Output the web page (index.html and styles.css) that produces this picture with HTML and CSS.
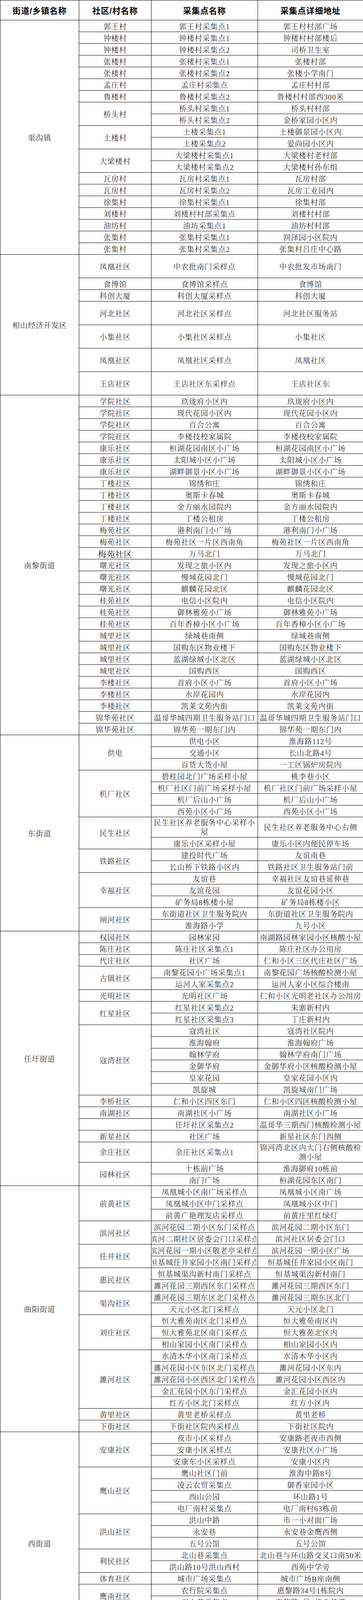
FILE: index.html
```html
<!DOCTYPE html>
<html lang="zh-CN">
<head>
<meta charset="utf-8">
<title>核酸采集点</title>
<link rel="stylesheet" href="styles.css">
</head>
<body>
<table class="sheet">
<colgroup><col class="c1"><col class="c2"><col class="c3"><col class="c4"></colgroup>
<thead>
<tr class="h"><th>街道/乡镇名称</th><th>社区/村名称</th><th>采集点名称</th><th>采集点详细地址</th></tr>
</thead>
<tbody>
<tr><td rowspan="20">渠沟镇</td><td>郭王村</td><td>郭王村采集点1</td><td>郭王村村部广场</td></tr>
<tr><td>钟楼村</td><td>钟楼村采集点1</td><td>钟楼村村部楼后</td></tr>
<tr><td>钟楼村</td><td>钟楼村采集点2</td><td>司桥卫生室</td></tr>
<tr><td>张楼村</td><td>张楼村采集点1</td><td>张楼村部</td></tr>
<tr><td>张楼村</td><td>张楼村采集点2</td><td>张楼小学南门</td></tr>
<tr><td>孟庄村</td><td>孟庄村采集点</td><td>孟庄村村部</td></tr>
<tr><td>鲁楼村</td><td>鲁楼村采集点2</td><td>鲁楼村村部西300米</td></tr>
<tr><td rowspan="2">桥头村</td><td>桥头村采集点1</td><td>桥头村村部</td></tr>
<tr><td>桥头村采集点2</td><td>金桥家园小区内</td></tr>
<tr><td rowspan="2">土楼村</td><td>土楼采集点1</td><td>土楼御景园小区内</td></tr>
<tr><td>土楼采集点2</td><td>爱尚园小区内</td></tr>
<tr><td rowspan="2">大梁楼村</td><td>大梁楼村采集点1</td><td>大梁楼村老村部</td></tr>
<tr><td>大梁楼村采集点2</td><td>大梁楼村孙东组</td></tr>
<tr><td>瓦房村</td><td>瓦房村采集点1</td><td>瓦房村部</td></tr>
<tr><td>瓦房村</td><td>瓦房村采集点2</td><td>瓦房工业园内</td></tr>
<tr><td>徐集村</td><td>徐集村采集点1</td><td>徐集村部</td></tr>
<tr><td>刘楼村</td><td>刘楼村村部采集点</td><td>刘楼村村部</td></tr>
<tr><td>油坊村</td><td>油坊采集点1</td><td>油坊村村部</td></tr>
<tr><td>张集村</td><td>张集村采集点1</td><td>润泽园小区院内</td></tr>
<tr><td>张集村</td><td>张集村采集点2</td><td>张集村吕庄中心路</td></tr>

<tr class="d"><td rowspan="7">相山经济开发区</td><td>凤凰社区</td><td>中农批南门采样点</td><td>中农批发市场南门</td></tr>
<tr><td>食博馆</td><td>食博馆采样点</td><td>食博馆</td></tr>
<tr><td>科创大厦</td><td>科创大厦采样点</td><td>科创大厦</td></tr>
<tr class="d"><td>河北社区</td><td>河北社区采样点</td><td>河北社区服务站</td></tr>
<tr class="d"><td>小集社区</td><td>小集社区采样点</td><td>小集社区</td></tr>
<tr class="d"><td>凤凰社区</td><td>凤凰社区采样点</td><td>凤凰社区</td></tr>
<tr class="d"><td>王店社区</td><td>王店社区东采样点</td><td>王店社区东</td></tr>

<tr><td rowspan="29">南黎街道</td><td>学院社区</td><td>玖珑府小区内</td><td>玖珑府小区内</td></tr>
<tr><td>学院社区</td><td>现代花园小区内</td><td>现代花园小区内</td></tr>
<tr><td>学院社区</td><td>百合公寓</td><td>百合公寓</td></tr>
<tr><td>学院社区</td><td>李楼技校家属院</td><td>李楼技校家属院</td></tr>
<tr><td>康乐社区</td><td>桓湖花园南区小广场</td><td>桓湖花园南区小广场</td></tr>
<tr><td>康乐社区</td><td>太阳城小区小广场</td><td>太阳城小区小广场</td></tr>
<tr><td>康乐社区</td><td>湖畔御景小区小广场</td><td>湖畔御景小区小广场</td></tr>
<tr><td>丁楼社区</td><td>锦绣和庄</td><td>锦绣和庄</td></tr>
<tr><td>丁楼社区</td><td>奥斯卡春城</td><td>奥斯卡春城</td></tr>
<tr><td>丁楼社区</td><td>金方丽水园院内</td><td>金方丽水园院内</td></tr>
<tr><td>丁楼社区</td><td>丁楼公租房</td><td>丁楼公租房</td></tr>
<tr><td>梅苑社区</td><td>港利南门小广场</td><td>港利南门小广场</td></tr>
<tr><td>梅苑社区</td><td>梅苑社区一片区西南角</td><td>梅苑社区一片区西南角</td></tr>
<tr><td class="big">梅苑社区</td><td>万马北门</td><td>万马北门</td></tr>
<tr><td>曙光社区</td><td>发现之旅小区内</td><td>发现之旅小区内</td></tr>
<tr><td>曙光社区</td><td>慢城花园北门</td><td>慢城花园北门</td></tr>
<tr><td>曙光社区</td><td>麒麟花园北区</td><td>麒麟花园北区</td></tr>
<tr><td>桂苑社区</td><td>电信小区院内</td><td>电信小区院内</td></tr>
<tr><td>桂苑社区</td><td>御林雅苑小广场</td><td>御林雅苑小广场</td></tr>
<tr><td>桂苑社区</td><td>百年香樟小区小广场</td><td>百年香樟小区小广场</td></tr>
<tr><td>城里社区</td><td>绿城巷南侧</td><td>绿城巷南侧</td></tr>
<tr><td>城里社区</td><td>国购东区物业楼下</td><td>国购东区物业楼下</td></tr>
<tr><td>城里社区</td><td>蓝湖绿城小区北区</td><td>蓝湖绿城小区北区</td></tr>
<tr><td>城里社区</td><td>国购西区</td><td>国购西区</td></tr>
<tr><td>李楼社区</td><td>首府小区小广场</td><td>首府小区小广场</td></tr>
<tr><td>李楼社区</td><td>水岸花园内</td><td>水岸花园内</td></tr>
<tr><td>李楼社区</td><td>凯莱文苑内街</td><td>凯莱文苑内街</td></tr>
<tr><td>锦华苑社区</td><td>温哥华城四期卫生服务站门口</td><td>温哥华城四期卫生服务站门口</td></tr>
<tr><td>锦华苑社区</td><td>锦华苑一期东门内</td><td>锦华苑一期东门内</td></tr>

<tr><td rowspan="16">东街道</td><td rowspan="3">供电</td><td>供电小区</td><td>淮海路112号</td></tr>
<tr><td>交通小区</td><td>长山北路4号</td></tr>
<tr><td>百货大货小屋</td><td>一工区锅炉房院内</td></tr>
<tr><td rowspan="4">机厂社区</td><td>碧桂园北门广场采样小屋</td><td>桃李巷小区</td></tr>
<tr><td>机厂社区门前广场采样小屋</td><td>机厂社区门前广场采样小屋</td></tr>
<tr><td>机厂后山小广场</td><td>机厂后山小广场</td></tr>
<tr><td>西苑小区小广场</td><td>西苑小区小广场</td></tr>
<tr class="t"><td rowspan="2">民生社区</td><td>民生社区养老服务中心采样小屋</td><td>民生社区养老服务中心右侧</td></tr>
<tr><td>康乐小区采样小屋</td><td>康乐小区内便民停车场</td></tr>
<tr><td rowspan="2">铁路社区</td><td>建投时代广场</td><td>友谊南巷</td></tr>
<tr><td>长山桥下铁路小区内</td><td>铁路社区卫生服务站门前</td></tr>
<tr><td rowspan="3">幸福社区</td><td>友谊巷</td><td>幸福社区友谊巷延伸巷</td></tr>
<tr><td>友谊花园</td><td>友谊花园小区</td></tr>
<tr><td>矿务局8栋楼小屋</td><td>矿务局8栋楼小区</td></tr>
<tr><td rowspan="2">闸河社区</td><td>东街道社区卫生服务院内</td><td>东街道社区卫生服务院内</td></tr>
<tr><td>淮海路小学</td><td>九号小区</td></tr>

<tr><td rowspan="21">任圩街道</td><td>权园社区</td><td>园林家园</td><td>南湖路园林家园小区核酸小屋</td></tr>
<tr><td>陈庄社区</td><td>陈庄社区采集点1</td><td>陈庄社区办公用房</td></tr>
<tr><td>代庄社区</td><td>社区广场</td><td>仁和小区三区代庄社区广场</td></tr>
<tr><td rowspan="2">古镇社区</td><td>南黎花园小广场采集点1</td><td>南黎花园广场核酸检测小屋</td></tr>
<tr><td>运河人家采集点2</td><td>运河人家小区综合楼南</td></tr>
<tr><td>光明社区</td><td>光明社区广场</td><td>仁和小区光明老社区办公用房</td></tr>
<tr><td rowspan="2">红星社区</td><td>红星社区采集点2</td><td>朱寨新村内</td></tr>
<tr><td>红星社区采集点3</td><td>丁庄新村内</td></tr>
<tr><td rowspan="6">寇湾社区</td><td>寇湾社区</td><td>寇湾社区院内</td></tr>
<tr><td>淮海翰府</td><td>淮海翰府广场</td></tr>
<tr><td>翰林学府</td><td>翰林学府南门广场</td></tr>
<tr><td>金御华府</td><td>金御华府小区核酸检测小屋</td></tr>
<tr><td>皇家花园</td><td>皇家花园小区内</td></tr>
<tr><td>凯旋城</td><td>凯旋城南门广场</td></tr>
<tr><td>李桥社区</td><td>仁和小区四区东门</td><td>仁和小区四区核酸检测小屋</td></tr>
<tr><td>南湖社区</td><td>南湖社区小广场</td><td>南湖社区小广场</td></tr>
<tr><td></td><td>任圩社区采集点2</td><td>温哥华三期西门核酸检测小屋</td></tr>
<tr><td>新星社区</td><td>社区广场</td><td>新星社区东门西侧</td></tr>
<tr class="t"><td>余庄社区</td><td>余庄社区采集点1</td><td>锦河湾北区内大门右侧核酸检测小屋</td></tr>
<tr><td rowspan="2">园林社区</td><td>十栋前广场</td><td>淮海御府10栋前</td></tr>
<tr><td>南门广场</td><td>桓湖花园东区南门</td></tr>

<tr><td rowspan="21">曲阳街道</td><td rowspan="3">前黄社区</td><td>凤凰城小区南广场采样点</td><td>凤凰城小区南广场</td></tr>
<tr><td>凤凰城小区中门采样点</td><td>凤凰城小区中门</td></tr>
<tr><td>前黄广艳理发店采样点</td><td>前黄庄里红绿灯</td></tr>
<tr><td rowspan="2">滨河社区</td><td>滨河花园二期小区东门采样点</td><td>滨河花园二期小区东门</td></tr>
<tr><td class="nw"><div>滨河二期社区居委会门口采样点</div></td><td>滨河社区居委会门口</td></tr>
<tr><td rowspan="2">任井社区</td><td class="nw"><div>滨河花园一期小区敬老亭采样点</div></td><td>滨河花园一期小区广场</td></tr>
<tr><td class="nw"><div>恒基城任井家园小区南门采样点</div></td><td>恒基城任井家园小区南门</td></tr>
<tr><td rowspan="2">惠民社区</td><td>恒基城渠沟新村南门采样点</td><td>恒基城渠沟新村南门</td></tr>
<tr><td>濉河花园三期西区东门采样点</td><td>濉河花园三期西区东门</td></tr>
<tr><td rowspan="2">渠沟社区</td><td>濉河花园三期东区北门采样点</td><td>濉河花园三期东区北门</td></tr>
<tr><td>天元小区北门采样点</td><td>天元小区北门</td></tr>
<tr><td rowspan="3">刘庄社区</td><td>恒大雅苑南区北门采样点</td><td>恒大雅苑南区内</td></tr>
<tr><td>恒大雅苑北区南门采样点</td><td>恒大雅苑北区内</td></tr>
<tr><td>相山家园小区南门采样点</td><td>相山家园小区内</td></tr>
<tr><td rowspan="5">濉河社区</td><td>水清木华小区南门采样点</td><td>水清木华小区内</td></tr>
<tr><td>濉河花园小区东区北门采样点</td><td>濉河花园小区东内</td></tr>
<tr><td>濉河花园小区西区北门采样点</td><td>濉河花园小区西区内</td></tr>
<tr><td>金汇花园小区东门采样点</td><td>金汇花园小区内</td></tr>
<tr><td>红方小区北门采样点</td><td>红方小区内</td></tr>
<tr><td>黄里社区</td><td>黄里老桥采样点</td><td>黄里老桥</td></tr>
<tr><td>下街社区</td><td>下街社区院内采样点</td><td>下街社区院内</td></tr>

<tr><td rowspan="19">西街道</td><td rowspan="3">安康社区</td><td>夜市小区采样点</td><td>安康路老夜市西侧</td></tr>
<tr><td>安康小区采样点</td><td>安康社区小广场</td></tr>
<tr><td>安康东小区采样点</td><td>安康小区内</td></tr>
<tr><td rowspan="4">鹰山社区</td><td>鹰山社区门前</td><td>淮海中路8号</td></tr>
<tr><td>凌云农贸采集点</td><td>御香家园小区</td></tr>
<tr><td>西山公园</td><td>环山路1号</td></tr>
<tr><td>电厂南村采集点</td><td>电厂南村63栋前</td></tr>
<tr><td rowspan="3">洪山社区</td><td>洪山中路</td><td>市一小对面广场</td></tr>
<tr><td>永安巷</td><td>永安巷金鹰西侧</td></tr>
<tr><td>五号公馆</td><td>五号公馆</td></tr>
<tr><td rowspan="2">利民社区</td><td>北山巷采集点</td><td>北山巷与环山路交叉口南50米</td></tr>
<tr><td>洪山路10号洪山西村</td><td>西苑中学旁</td></tr>
<tr><td>体育社区</td><td>城市广场采集点</td><td>城市广场B座南侧</td></tr>
<tr><td rowspan="2">鹰南社区</td><td>农行院采集点</td><td>惠黎路34号1栋院内</td></tr>
<tr><td>五小巷采集点</td><td>惠黎路8号1栋北巷道</td></tr>
<tr><td rowspan="2">新华社区</td><td>华松商场南门</td><td>淮海路78号</td></tr>
<tr><td>相山路4号院</td><td>建委大院里</td></tr>
<tr><td rowspan="2">建安社区</td><td>天桥小区内</td><td>天骄小区内</td></tr>
<tr><td>307小区采集点</td><td>307小区采集点</td></tr>

<tr><td rowspan="12">东山街道</td><td rowspan="3">东山社区</td><td>特凿小区内医院门前</td><td>特凿小区内医院门前</td></tr>
<tr><td>总仓库小区</td><td>总仓库小区内</td></tr>
<tr><td>中建二局小区</td><td>中建二局小区</td></tr>
<tr><td>翰林社区</td><td>科苑小区</td><td>科苑小区门口内</td></tr>
<tr><td></td><td>翰林红色驿站</td><td>翰林红色驿站</td></tr>
<tr><td rowspan="2">建国社区</td><td>民生小区</td><td>民生小区门口内</td></tr>
<tr><td>紫藤苑小区</td><td>紫藤苑小区</td></tr>
<tr><td rowspan="2">马庄社区</td><td>马庄社区采集点1</td><td>新兴小区东门内</td></tr>
<tr><td>马庄社区采集点2</td><td>喜来登路口小区内</td></tr>
<tr><td>方顶社区</td><td>广泽家园</td><td>广泽家园B门口内</td></tr>
<tr><td>周庄社区</td><td>方安一期</td><td>方安一期门口内</td></tr>
<tr><td>祥和社区</td><td>910厂中心花园</td><td>910厂中心花园小区内</td></tr>

<tr><td rowspan="30">三堤口街道</td><td rowspan="3">三堤口社区</td><td>三堤口学校采集点</td><td>三堤口街银鑫花园门口</td></tr>
<tr class="t"><td>三堤口街口子卫生服务站采集点</td><td>口子卫生服务站</td></tr>
<tr><td>矿建基地采样点</td><td>矿建基地</td></tr>
<tr><td rowspan="4">刘桥社区</td><td>刘一小区夜市采样点</td><td>刘一小区夜市</td></tr>
<tr><td>刘桥一矿体育场东采样点</td><td>刘桥一矿体育场东</td></tr>
<tr><td>和谐小区采样点</td><td>和谐小区</td></tr>
<tr><td>刘桥一矿体育场东采样点</td><td>刘桥一矿体育场东</td></tr>
<tr><td rowspan="2">口子社区</td><td>三分厂球场采样点</td><td>三分厂球场</td></tr>
<tr><td>皖北西库采样点</td><td>皖北西库</td></tr>
<tr><td rowspan="4">庆相桥社区</td><td>五马路朱西菜市场北采样点</td><td>五马路朱西菜市场</td></tr>
<tr><td>政协广场</td><td>庆相桥社区旁的政协广场</td></tr>
<tr><td>家天下小区C区</td><td>家天下小区C区</td></tr>
<tr><td>香榭左岸售楼部采样点</td><td>香榭左岸售楼部</td></tr>
<tr><td rowspan="2">恒源社区</td><td>恒源工人村篮球场采样点</td><td>恒源工人村篮球场</td></tr>
<tr><td>振兴小区采集点采样点</td><td>振兴小区</td></tr>
<tr><td rowspan="2">朱庄社区</td><td>朱庄社区院内采样点</td><td>朱庄社区院内</td></tr>
<tr><td>热电厂小区南门采样点</td><td>热电厂小区南门</td></tr>
<tr><td rowspan="3">濉溪社区</td><td>东酒厂采样点</td><td>东酒厂</td></tr>
<tr><td>工程处单身楼小广场采样点</td><td>工程处单身楼小广场</td></tr>
<tr><td>钢丝绳厂单身楼小广场采样点</td><td>钢丝绳厂单身楼小广场</td></tr>
<tr><td rowspan="4">纺织社区</td><td>三分厂内</td><td>三分厂内</td></tr>
<tr><td>无纺厂采样点</td><td>无纺厂</td></tr>
<tr><td>溪河苑小区采样点</td><td>溪河苑小区</td></tr>
<tr><td>纺织社区居委会门口采样点</td><td>纺织社区居委会门口</td></tr>
<tr><td rowspan="2">董庄社区</td><td>金地御景小区采样点</td><td>金地御景小区</td></tr>
<tr><td>农行小区1号楼北侧</td><td>农行小区1号楼北侧</td></tr>
<tr><td rowspan="4">虎山北路社区</td><td>南苑小区门面后采样点</td><td>南苑小区</td></tr>
<tr><td>友圣家园采样点</td><td>友圣家园</td></tr>
<tr><td>弘元小区内采样点</td><td>弘元小区</td></tr>
<tr><td>纺织小区采样点</td><td>纺织小区</td></tr>

<tr><td rowspan="27">相南街道</td><td rowspan="4">中城社区</td><td>金冠紫园采集点</td><td>金冠紫园南门门岗</td></tr>
<tr><td>怡和佳园采集点</td><td>怡和佳园12栋一楼门面</td></tr>
<tr><td>华松时代北区采集点</td><td>华松时代北区南门门岗</td></tr>
<tr><td>华松时代南区采集点</td><td>华松时代南区东门门岗</td></tr>
<tr><td rowspan="3">惠苑路</td><td>惠苑路社区门口</td><td>相山北路111号统建小区院内</td></tr>
<tr><td>黎苑二期F组大门口</td><td>黎苑路70号黎苑二期F组大门</td></tr>
<tr><td>九栋楼院内</td><td>长山北路109号老九栋2栋南侧</td></tr>
<tr><td rowspan="2">春秋社区</td><td>春秋巷北头</td><td>春秋巷北头</td></tr>
<tr><td>海宫东广场</td><td class="flag">春秋巷南头</td></tr>
<tr><td rowspan="4">杏林社区</td><td>柳岸花明小区北门</td><td>惠黎路51号</td></tr>
<tr><td>国际商城东</td><td>国际商城小区内</td></tr>
<tr><td>杏林中城小区采集点</td><td>杏林社区服务站门口</td></tr>
<tr><td>美年大年健康门岗</td><td>金色阳光花园小区</td></tr>
<tr><td rowspan="4">桓谭社区</td><td>金色云天东苑南门</td><td>金色云天东苑小区南门内</td></tr>
<tr><td>火车站广场</td><td>金色云天北苑西区南门内</td></tr>
<tr class="t"><td>金色云天西苑北门</td><td>相山区金色云天西苑小区北门内</td></tr>
<tr><td>桓谭小区北门</td><td>相山区桓谭小区小区北门内</td></tr>
<tr><td rowspan="3">海宫社区</td><td>海宫南村</td><td>社区门口</td></tr>
<tr><td>凯旋百年</td><td>凯旋百年西门内</td></tr>
<tr><td>相王府邸</td><td>相王府邸西门内</td></tr>
<tr><td rowspan="2">相阳社区</td><td>惠苑小区北门</td><td>惠苑小区北门内</td></tr>
<tr><td>中泰国际花园核酸监测小屋</td><td>中泰国际花园核酸监测小屋</td></tr>
<tr><td rowspan="3">西城社区</td><td>翠峰小区东门核酸采样点</td><td>翠峰小区东门内</td></tr>
<tr><td>碧桂园黄金时代核酸采样点</td><td>黄金时代小区内</td></tr>
<tr><td>启明卫生服务站核酸采样点</td><td>启明卫生服务站</td></tr>
<tr><td rowspan="2">黎苑社区</td><td>黎苑社区采集点1</td><td>黎苑一期北门内</td></tr>
<tr><td>黎苑社区采集点2</td><td>黎苑二期西门内</td></tr>
</tbody>
</table>
<div class="watermark"><div class="wm-cn">淮北人</div><div class="wm-en">HAIBEI.COM</div></div>
</body>
</html>
```

FILE: styles.css
```css
html, body {
  margin: 0;
  padding: 0;
  background: #ffffff;
}

body {
  position: relative;
  font-family: "Liberation Serif", "Noto Serif CJK SC", "Noto Sans CJK SC", serif;
}

.sheet {
  width: 930px;
  border-collapse: collapse;
  table-layout: fixed;
  color: #333333;
  font-size: 19px;
  letter-spacing: 1px;
}

.c1 { width: 202px; }
.c2 { width: 185px; }
.c3 { width: 273px; }
.c4 { width: 270px; }

.sheet th,
.sheet td {
  border: 1px solid #000000;
  padding: 5px 2px 0;
  text-align: center;
  vertical-align: middle;
  line-height: 24px;
  font-weight: normal;
}

.sheet tr { height: 30px; }
.sheet tr.h { height: 51px; }
.sheet tr.t { height: 52px; }
.sheet tr.d { height: 60px; }

.sheet tr.t > td {
  padding-top: 3px;
}

.sheet th {
  color: #000000;
  font-family: "Liberation Sans", "Noto Sans CJK SC", sans-serif;
  font-weight: bold;
  font-size: 21px;
  padding-top: 4px;
}

.sheet td.big {
  font-size: 21px;
  color: #222222;
}

.sheet td.nw > div {
  display: flex;
  justify-content: center;
  white-space: nowrap;
  overflow: hidden;
}

.sheet td.flag {
  position: relative;
  padding-left: 30px;
}

.sheet td.flag::before {
  content: "";
  position: absolute;
  top: 0;
  left: 0;
  border-top: 5px solid #1f8a1f;
  border-right: 5px solid transparent;
}

.watermark {
  position: absolute;
  left: 716px;
  top: 6266px;
  width: 212px;
  pointer-events: none;
  text-align: center;
  color: rgba(150, 175, 215, 0.28);
  font-family: "Noto Sans CJK SC", sans-serif;
}

.wm-cn {
  font-size: 44px;
  line-height: 52px;
  font-style: italic;
  font-weight: bold;
  letter-spacing: 18px;
}

.wm-en {
  font-family: "Liberation Sans", sans-serif;
  font-size: 22px;
  line-height: 24px;
  font-weight: bold;
  letter-spacing: 2px;
}
```
